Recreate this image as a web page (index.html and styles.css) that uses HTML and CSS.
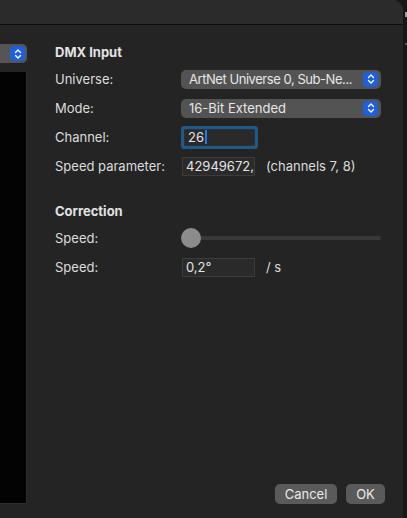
FILE: index.html
```html
<!DOCTYPE html>
<html lang="en">
<head>
  <meta charset="UTF-8">
  <title>DMX Input</title>
  <link rel="stylesheet" href="styles.css">
</head>
<body>
  <div class="window">
    <div class="sheet">
      <div class="titlebar"></div>

      <div class="main">
        <!-- list pane behind the sheet -->
        <div class="side">
          <div class="side-popup">
            <span class="stepper">
              <svg width="10" height="12" viewBox="0 0 10 12"><path d="M2.5 4.5 L5 2 L7.5 4.5 M2.5 7.5 L5 10 L7.5 7.5" fill="none" stroke="#fff" stroke-width="1.4" stroke-linecap="round" stroke-linejoin="round"/></svg>
            </span>
          </div>
          <div class="side-list"></div>
        </div>

        <div class="content">
          <h3 class="section">DMX Input</h3>

          <div class="row">
            <label>Universe:</label>
            <div class="popup">
              <span class="popup-text popup-text-long">ArtNet Universe 0, Sub-Ne...</span>
              <span class="stepper">
                <svg width="10" height="12" viewBox="0 0 10 12"><path d="M2.5 4.5 L5 2 L7.5 4.5 M2.5 7.5 L5 10 L7.5 7.5" fill="none" stroke="#fff" stroke-width="1.4" stroke-linecap="round" stroke-linejoin="round"/></svg>
              </span>
            </div>
          </div>

          <div class="row">
            <label>Mode:</label>
            <div class="popup">
              <span class="popup-text">16-Bit Extended</span>
              <span class="stepper">
                <svg width="10" height="12" viewBox="0 0 10 12"><path d="M2.5 4.5 L5 2 L7.5 4.5 M2.5 7.5 L5 10 L7.5 7.5" fill="none" stroke="#fff" stroke-width="1.4" stroke-linecap="round" stroke-linejoin="round"/></svg>
              </span>
            </div>
          </div>

          <div class="row">
            <label>Channel:</label>
            <div class="field field-focus">26<span class="caret"></span></div>
          </div>

          <div class="row">
            <label>Speed parameter:</label>
            <div class="field">42949672,</div>
            <span class="unit">(channels 7, 8)</span>
          </div>

          <h3 class="section section-gap">Correction</h3>

          <div class="row">
            <label>Speed:</label>
            <div class="slider">
              <div class="track"></div>
              <div class="knob"></div>
            </div>
          </div>

          <div class="row">
            <label>Speed:</label>
            <div class="field">0,2°</div>
            <span class="unit">/ s</span>
          </div>

          <div class="buttons">
            <button class="btn btn-cancel">Cancel</button>
            <button class="btn btn-ok">OK</button>
          </div>
        </div>
      </div>
    </div>

    <div class="edge">
      <span class="edge-mark"></span>
      <span class="edge-mark edge-mark-2"></span>
    </div>
  </div>
</body>
</html>
```

FILE: styles.css
```css
html, body {
  margin: 0;
  height: 100%;
}
body {
  font-family: Inter, "Liberation Sans", Arial, sans-serif;
  font-size: 13px;
  color: #dcdcdc;
  background-color: #161616;
}
.window {
  display: flex;
  height: 518px;
}
.sheet {
  width: 403px;
  display: flex;
  flex-direction: column;
  background-color: #242424;
  border-top-right-radius: 10px;
  overflow: hidden;
}
.titlebar {
  height: 24px;
  background-color: #2b2b2b;
  border-bottom: 1px solid #0c0c0c;
  flex-shrink: 0;
}
.main {
  flex: 1;
  display: flex;
}

/* list pane on the left */
.side {
  width: 27px;
  display: flex;
  flex-direction: column;
  padding-top: 19px;
  box-sizing: border-box;
}
.side-popup {
  height: 19px;
  background-color: #555;
  border-radius: 0 5px 5px 0;
  display: flex;
  justify-content: flex-end;
  align-items: center;
  padding-right: 2px;
}
.side-list {
  margin-top: 9px;
  height: 431px;
  background-color: #030303;
  border-right: 1px solid #2e2e2e;
  border-bottom: 1px solid #2e2e2e;
}

.content {
  flex: 1;
  display: flex;
  flex-direction: column;
  padding: 19px 18px 14px 28px;
}
.section {
  margin: 0 0 8px;
  height: 16px;
  line-height: 16px;
  font-size: 13px;
  font-weight: 700;
  color: #e2e2e2;
}
.section-gap {
  margin-top: 19px;
}
.row {
  display: flex;
  align-items: center;
  height: 22px;
  margin-bottom: 7px;
}
.row label {
  width: 126px;
  flex-shrink: 0;
}

.popup {
  width: 200px;
  height: 19px;
  box-sizing: border-box;
  background-color: #535353;
  border-radius: 5px;
  display: flex;
  align-items: center;
  justify-content: space-between;
  padding: 0 3px 0 8px;
  color: #e6e6e6;
}
.popup-text {
  white-space: nowrap;
  min-width: 0;
  flex: 1;
}
.popup-text-long {
  letter-spacing: -0.45px;
}
.stepper {
  width: 15px;
  height: 15px;
  flex-shrink: 0;
  border-radius: 4px;
  background-color: #1f5fdc;
  display: flex;
  align-items: center;
  justify-content: center;
}

.field {
  width: 73px;
  height: 19px;
  box-sizing: border-box;
  background-color: #2a2a2a;
  border: 1px solid #3c3c3c;
  padding-left: 3px;
  line-height: 17px;
  margin-left: 1px;
  color: #e4e4e4;
  display: flex;
  align-items: center;
  white-space: nowrap;
}
.field-focus {
  width: 71px;
  height: 17px;
  margin-left: 3px;
  border: 1px solid #2f2f2f;
  box-shadow: 0 0 0 3px #1d5a8a;
  border-radius: 1px;
}
.caret {
  width: 2px;
  height: 14px;
  background-color: #1a7cf5;
  margin-left: 1px;
}
.unit {
  margin-left: 11px;
}

.slider {
  position: relative;
  width: 200px;
  height: 22px;
}
.track {
  position: absolute;
  left: 10px;
  right: 0;
  top: 9px;
  height: 4px;
  border-radius: 2px;
  background-color: #393939;
}
.knob {
  position: absolute;
  left: 0;
  top: 1px;
  width: 20px;
  height: 20px;
  border-radius: 50%;
  background-color: #8c8c8c;
}

.buttons {
  margin-top: auto;
  display: flex;
  justify-content: flex-end;
  gap: 9px;
}
.btn {
  font-family: inherit;
  font-size: 13px;
  height: 20px;
  padding: 0;
  border: none;
  border-radius: 5px;
  background-color: #5a5a5a;
  color: #eaeaea;
}
.btn-cancel {
  width: 62px;
}
.btn-ok {
  width: 39px;
}

/* strip of the window behind, on the right */
.edge {
  flex: 1;
  position: relative;
  background-color: #171717;
}
.edge-mark {
  position: absolute;
  right: 0;
  top: 12px;
  width: 2px;
  height: 5px;
  background-color: #9a9a9a;
}
.edge-mark-2 {
  top: 43px;
  height: 2px;
  background-color: #555;
}
```
